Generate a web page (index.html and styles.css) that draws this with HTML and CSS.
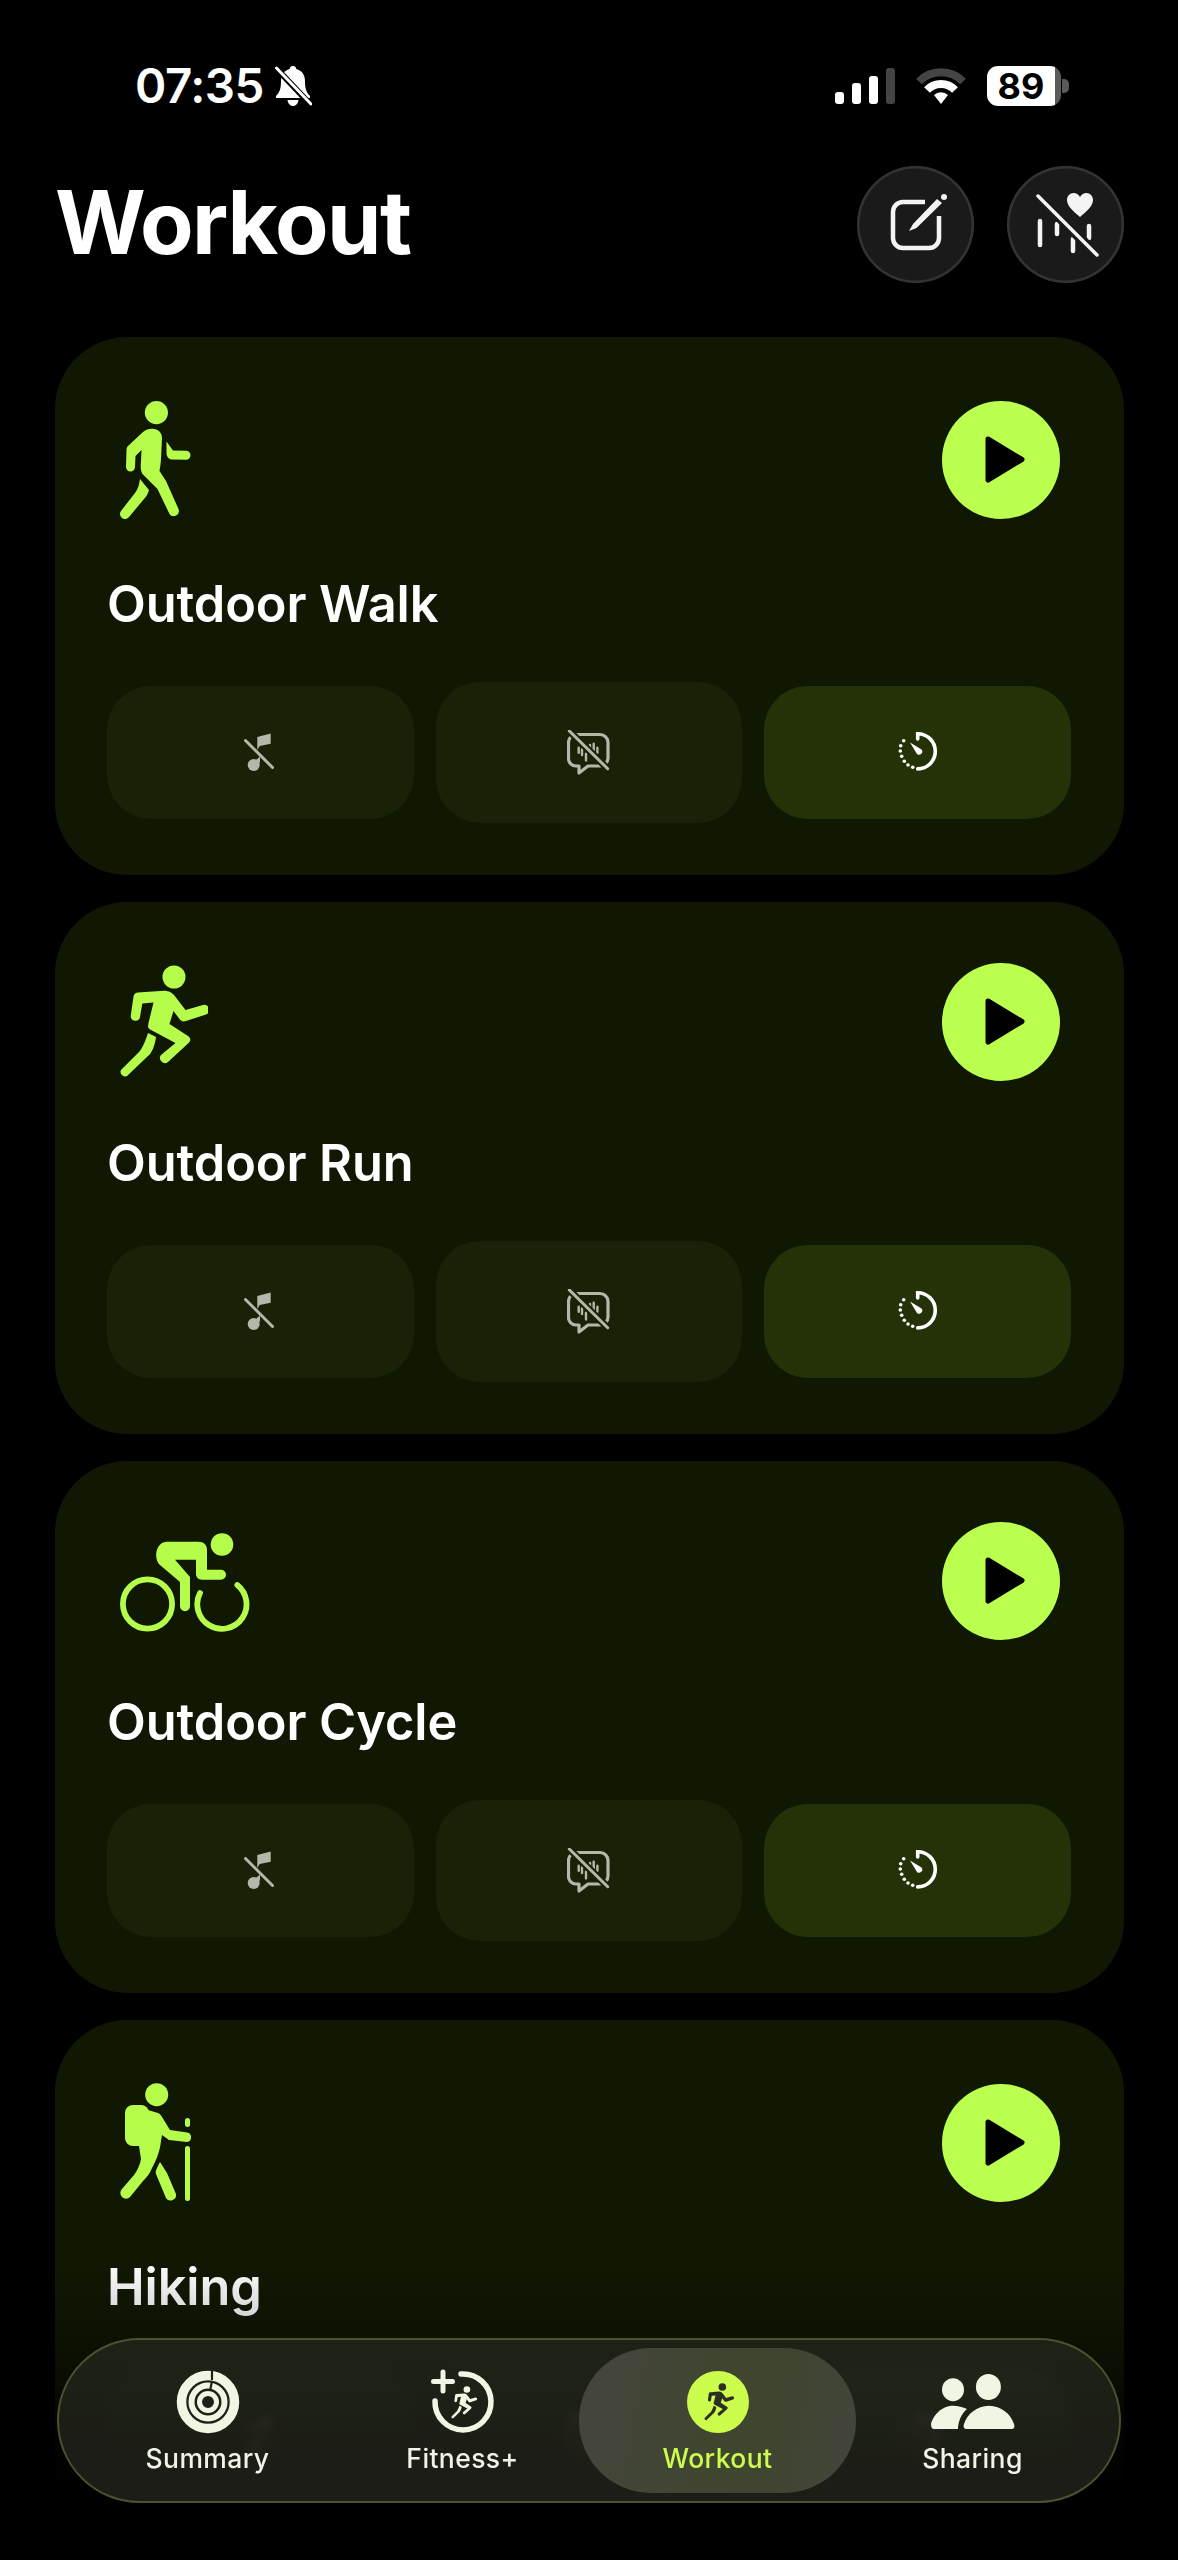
FILE: index.html
```html
<!DOCTYPE html>
<html lang="en">
<head>
<meta charset="utf-8">
<title>Workout</title>
<link rel="stylesheet" href="styles.css">
</head>
<body>
<svg class="sprite" aria-hidden="true">
  <symbol id="walker" viewBox="0 0 74 118">
    <circle cx="36.4" cy="11.6" r="11.6"/>
    <path d="M30 28C37 27 42 31 42 37L41 58C40.7 63 40 67 39.5 70L46 80L58.5 108A5.2 5.2 0 0 1 49.5 113L37.5 88L22.5 73C20.5 70 20.5 66 21 60L21.5 49L15.5 55L15 66A4.5 4.5 0 0 1 6 66L6.5 49C6.5 47 7 46 8 45L23 31C25.5 29 27.5 28 30 28Z"/>
    <path d="M46.5 40.5L53 49.5L66 49.8A4.5 4.5 0 0 1 66 58.8L52 58.5C49 58.5 47 56 46.5 53Z"/>
    <path d="M20 78L29 89C28 93 26 96 24 98L9 116A5 5 0 0 1 1 110L15 92C18 88 19 84 20 78Z"/>
  </symbol>
  <symbol id="runner" viewBox="0 0 88 114">
    <circle cx="54" cy="12" r="11.5"/>
    <path d="M18 27.5L44 25.8C49 25.8 52 28 54 30L65.5 45L83 40A5 5 0 0 1 86 49.5L66 56C63 57 61 56 59.5 54L53.5 46L49.5 59L68 71C71 73 71 76 68 78.5L48 97A5 5 0 0 1 41 90L55.5 78L31 65C28 63.5 27.5 62 28.5 58L33.5 37.5L22.3 38.5L20 52A4.7 4.7 0 0 1 10.7 51L13.5 31.5C14 29 16 27.5 18 27.5Z"/>
    <path d="M28 68L36 72C35 80 32 88 28 91L7 111A4.5 4.5 0 0 1 1 105L20 86C24 80 26 74 28 68Z"/>
  </symbol>
  <symbol id="cyclist" viewBox="0 0 130 100">
    <circle cx="102" cy="11.5" r="11.3"/>
    <path d="M47 8.7L78 8.7C84 8.7 87 12 87 17L87 36.7L101 36.7A5 5 0 0 1 101 46.7L82 46.7C78 46.7 76 44 76 41L76 26.7L55 26.7L70 44L70 73.3A5 5 0 0 1 60 73.3L60 49L40 32C33 25 36 8.7 47 8.7Z"/>
    <circle class="wheel" cx="27.5" cy="71" r="24.6"/>
    <path class="wheel" d="M80 60A24.6 24.6 0 1 0 117.3 52"/>
  </symbol>
  <symbol id="hiker" viewBox="0 0 74 120">
    <circle cx="36.7" cy="11.7" r="11.5"/>
    <rect x="5" y="22" width="24" height="41" rx="8"/>
    <path d="M28 27L38 30C40 31 41 32 42 34L50 47L67 49.5A4.8 4.8 0 0 1 67 59L49 57L42 52L41 58C40 68 36 78 32 85C30 90 28 93 23 98L10 114A5.5 5.5 0 0 1 2 106L14 92C17 88 20 82 21 76L19 63L20 27Z"/>
    <path d="M40 79L47 90L56 111A5.5 5.5 0 0 1 46 115L36 91C35 88 37 85 40 79Z"/>
    <rect x="65" y="35" width="5" height="9" rx="2.5"/>
    <rect x="65" y="63" width="5" height="55" rx="2.5"/>
  </symbol>
  <symbol id="play" viewBox="0 0 118 118">
    <path class="play-tri" d="M46 38L80 58.5L46 79Z"/>
  </symbol>
  <symbol id="note-off" viewBox="0 0 32 40">
    <circle cx="9.7" cy="32" r="6"/>
    <path d="M13.3 4L26.7 .5L26.7 10.7L15.7 13L13.3 17Z"/>
    <path d="M12 27L16 23.5L16 29L12 35Z"/>
    <path class="cut-line" d="M1.5 7.5L28.5 34.5"/>
  </symbol>
  <symbol id="voice-off" viewBox="0 0 44 46">
    <path class="voice-outline" d="M9 4.5H33A8 8 0 0 1 41 12.5V28A8 8 0 0 1 33 36H21L12 43V36H9A7.5 7.5 0 0 1 1.5 28V12.5A8 8 0 0 1 9 4.5Z"/>
    <path class="voice-bars" d="M11.7 17.7V22.7M15 19.4V25M19 23.7V30.4M23 15V21M26.7 13.7V20.4M30.4 17.7V22.7"/>
    <path class="voice-cut" d="M2.3 1L40.7 38.7"/>
    <path class="voice-slash" d="M2.3 1L40.7 38.7"/>
  </symbol>
  <symbol id="timer" viewBox="0 0 44 44">
    <path class="timer-arc" d="M21.7 8V2.7A17.6 17.6 0 0 1 21.7 37.9"/>
    <circle cx="7.7" cy="9.7" r="1.8"/><circle cx="4.7" cy="14.7" r="1.8"/><circle cx="4.3" cy="20" r="1.8"/><circle cx="5.7" cy="25.3" r="1.8"/><circle cx="8.3" cy="30.3" r="1.8"/><circle cx="12" cy="34" r="1.8"/><circle cx="16.7" cy="36.3" r="1.8"/>
    <path d="M14 11.5L25.5 18.5A3.2 3.2 0 0 1 21 23Z"/>
  </symbol>
</svg>

<div class="phone">
  <div class="status">
    <div class="status-left">
      <span class="clock">07:35</span>
      <svg class="bell" viewBox="0 0 38 40"><path d="M19 0C21 0 22 1 22.3 3C28 4.5 31 9 31 15C31 22 32 26 36 30V32H2V30C6 26 7 22 7 15C7 9 10 4.5 15.7 3C16 1 17 0 19 0Z"/><path d="M13.5 34H24.5C24 37.5 22 40 19 40C16 40 14 37.5 13.5 34Z"/><path class="bell-cut" d="M2 2L38 40"/><path class="bell-slash" d="M2.5 2L37 38"/></svg>
    </div>
    <div class="status-right">
      <div class="signal"><i class="bar bar-1"></i><i class="bar bar-2"></i><i class="bar bar-3"></i><i class="bar bar-4"></i></div>
      <svg class="wifi" viewBox="0 0 50 38"><path class="wifi-far" d="M3 14.5A31 31 0 0 1 47 14.5"/><path class="wifi-near" d="M11 23A19.5 19.5 0 0 1 39 23"/><path d="M18 28A10 10 0 0 1 32 28L25 37Z"/></svg>
      <div class="battery"><span>89</span></div>
      <i class="battery-cap"></i>
    </div>
  </div>

  <header class="header">
    <h1 class="title">Workout</h1>
    <div class="header-actions">
      <button class="round-btn">
        <svg viewBox="0 0 117 117"><path class="compose-box" d="M68 36H46A10 10 0 0 0 36 46V72A10 10 0 0 0 46 82H72A10 10 0 0 0 82 72V50"/><path d="M52 65L56 58L80 33L85 37L59.5 62Z"/><circle cx="87" cy="31" r="3"/></svg>
      </button>
      <button class="round-btn">
        <svg viewBox="0 0 117 117"><path d="M73 51C66 45 60 40 60 34C60 30 63 27 66.5 27C69.5 27 72 29 73 31C74 29 76.5 27 79.5 27C83 27 86 30 86 34C86 40 80 45 73 51Z"/><path class="hb-bars" d="M33 55V79M50 58V68M66 73V85M82 60V72"/><path class="hb-cut" d="M31 30L90 89"/><path class="hb-slash" d="M31 30L90 89"/></svg>
      </button>
    </div>
  </header>

  <main class="cards">
    <section class="card card-tall">
      <div class="card-head">
        <svg class="sport sport-walk"><use href="#walker"/></svg>
        <button class="play"><svg><use href="#play"/></svg></button>
      </div>
      <h2 class="card-title">Outdoor Walk</h2>
      <div class="actions">
        <button class="action"><svg class="ic-note"><use href="#note-off"/></svg></button>
        <button class="action action-mid"><svg class="ic-voice"><use href="#voice-off"/></svg></button>
        <button class="action action-on"><svg class="ic-timer"><use href="#timer"/></svg></button>
      </div>
    </section>

    <section class="card">
      <div class="card-head">
        <svg class="sport sport-run"><use href="#runner"/></svg>
        <button class="play"><svg><use href="#play"/></svg></button>
      </div>
      <h2 class="card-title">Outdoor Run</h2>
      <div class="actions">
        <button class="action"><svg class="ic-note"><use href="#note-off"/></svg></button>
        <button class="action action-mid"><svg class="ic-voice"><use href="#voice-off"/></svg></button>
        <button class="action action-on"><svg class="ic-timer"><use href="#timer"/></svg></button>
      </div>
    </section>

    <section class="card">
      <div class="card-head">
        <svg class="sport sport-cycle"><use href="#cyclist"/></svg>
        <button class="play"><svg><use href="#play"/></svg></button>
      </div>
      <h2 class="card-title">Outdoor Cycle</h2>
      <div class="actions">
        <button class="action"><svg class="ic-note"><use href="#note-off"/></svg></button>
        <button class="action action-mid"><svg class="ic-voice"><use href="#voice-off"/></svg></button>
        <button class="action action-on"><svg class="ic-timer"><use href="#timer"/></svg></button>
      </div>
    </section>

    <section class="card card-tall">
      <div class="card-head">
        <svg class="sport sport-hike"><use href="#hiker"/></svg>
        <button class="play"><svg><use href="#play"/></svg></button>
      </div>
      <h2 class="card-title">Hiking</h2>
      <div class="actions">
        <button class="action"><svg class="ic-note"><use href="#note-off"/></svg></button>
        <button class="action action-mid"><svg class="ic-voice"><use href="#voice-off"/></svg></button>
        <button class="action action-on"><svg class="ic-timer"><use href="#timer"/></svg></button>
      </div>
    </section>
  </main>

  <div class="fade"></div>

  <nav class="tabbar">
    <a class="tab">
      <svg class="tab-icon" viewBox="0 0 62 62"><circle class="ring ring-a" cx="31" cy="31" r="26.5"/><circle class="ring ring-b" cx="31" cy="31" r="16.5"/><circle class="ring ring-c" cx="31" cy="31" r="8.5"/><path class="ring-gap" d="M35 0V9M35 10L33 20"/></svg>
      <span class="tab-label">Summary</span>
    </a>
    <a class="tab">
      <svg class="tab-icon" viewBox="0 0 62 62"><path class="fit-arc" d="M29 3A28 28 0 1 1 3 30"/><path class="fit-plus" d="M11 1V20M1.5 10.500H20.500"/><svg x="19" y="15" width="26" height="33"><use href="#runner"/></svg></svg>
      <span class="tab-label">Fitness+</span>
    </a>
    <a class="tab tab-active">
      <svg class="tab-icon" viewBox="0 0 62 62"><circle class="work-disc" cx="31" cy="31" r="31"/><svg class="work-run" x="17" y="12" width="30" height="38"><use href="#runner"/></svg></svg>
      <span class="tab-label">Workout</span>
    </a>
    <a class="tab">
      <svg class="tab-share" viewBox="0 0 84 62"><ellipse cx="22" cy="18.700" rx="11" ry="11.500"/><ellipse cx="57.400" cy="16" rx="12.500" ry="13"/><path d="M36 58H80C83 58 84 56 83 53C80 43 70 34.700 58 34.700C46 34.700 36 43 33 53C32 56 33 58 36 58Z"/><path d="M3 58H27C27 51 30 43 36 38C32 36 27 34.700 22 34.700C10 34.700 2 45 0 53C0 56 1 58 3 58Z"/></svg>
      <span class="tab-label">Sharing</span>
    </a>
  </nav>
</div>
</body>
</html>
```
FILE: styles.css
```css
* { box-sizing: border-box; }
html, body { margin: 0; padding: 0; background: #000; }
body { font-family: Inter, "Liberation Sans", sans-serif; color: #fff; }
button { border: 0; padding: 0; margin: 0; font: inherit; color: inherit; }
.sprite { position: absolute; width: 0; height: 0; overflow: hidden; }

.phone { position: relative; width: 1178px; height: 2560px; overflow: hidden; background: #000; }

/* status bar */
.status { display: flex; justify-content: space-between; align-items: center; height: 40px; margin-top: 66px; padding: 0 109px 0 135px; }
.status-left { display: flex; align-items: center; gap: 10px; }
.clock { font-size: 47.500px; font-weight: 600; line-height: 40px; letter-spacing: -.5px; }
.bell { width: 38px; height: 40px; fill: #fff; }
.bell-cut { stroke: #000; stroke-width: 6; }
.bell-slash { stroke: #fff; stroke-width: 3; stroke-linecap: round; }
.status-right { display: flex; align-items: center; }
.signal { display: flex; align-items: flex-end; gap: 8px; height: 36px; margin-right: 21px; }
.bar { display: block; width: 9px; border-radius: 3px; background: #fff; }
.bar-1 { height: 12px; }
.bar-2 { height: 21px; }
.bar-3 { height: 28px; }
.bar-4 { height: 36px; background: #444; }
.wifi { width: 50px; height: 38px; margin-right: 21px; fill: #fff; }
.wifi-far, .wifi-near { fill: none; stroke-width: 8; }
.wifi-far { stroke: #444; }
.wifi-near { stroke: #fff; }
.battery { display: flex; align-items: center; justify-content: center; width: 74px; height: 40px; border-radius: 11px; background: linear-gradient(90deg, #fff 92%, #5a5a5a 92%); color: #000; font-size: 36px; font-weight: 700; line-height: 40px; padding-right: 6px; }
.battery-cap { display: block; width: 7px; height: 14px; border-radius: 0 5px 5px 0; background: #5a5a5a; margin-left: 1px; }

/* header */
.header { display: flex; justify-content: space-between; align-items: center; margin-top: 60px; padding: 0 54px 0 55px; }
.title { margin: -6px 0 0; font-size: 87.500px; font-weight: 700; line-height: 100px; letter-spacing: -1.500px; }
.header-actions { display: flex; gap: 33px; }
.round-btn { display: block; width: 117px; height: 117px; border-radius: 50%; background: #1a1a1a; box-shadow: inset 0 0 0 2.500px #333; }
.round-btn svg { display: block; width: 117px; height: 117px; fill: #f4f4f4; }
.compose-box { fill: none; stroke: #f4f4f4; stroke-width: 4.500; }
.hb-bars { fill: none; stroke: #f4f4f4; stroke-width: 4.500; stroke-linecap: round; }
.hb-cut { fill: none; stroke: #1a1a1a; stroke-width: 10; }
.hb-slash { fill: none; stroke: #f4f4f4; stroke-width: 3.500; stroke-linecap: round; }

/* cards */
.cards { display: flex; flex-direction: column; gap: 27px; margin-top: 54px; padding: 0 54px 0 55px; }
.card { flex: none; display: flex; flex-direction: column; padding: 61px 53px 56px 52px; border-radius: 72px; background: #101803; }
.card-tall { padding-top: 64px; }
.card-head { display: flex; justify-content: space-between; align-items: center; height: 118px; padding: 0 11px 0 13px; }
.sport { display: block; fill: #b6fd4b; }
.sport-walk { width: 74px; height: 118px; }
.sport-run { width: 88px; height: 114px; }
.sport-cycle { width: 130px; height: 100px; margin-top: 4px; }
.sport-hike { width: 74px; height: 120px; }
.wheel { fill: none; stroke: #b6fd4b; stroke-width: 5.800; stroke-linecap: round; }
.play { display: block; width: 118px; height: 118px; border-radius: 50%; background: #bbff4f; }
.play svg { display: block; width: 118px; height: 118px; }
.play-tri { fill: #000; stroke: #000; stroke-width: 5; stroke-linejoin: round; }
.card-title { margin: 52px 0 52px; font-size: 50.500px; font-weight: 600; line-height: 60px; letter-spacing: -.1px; }
.card-tall .card-title { margin: 55px 0 52px; }
.actions { display: grid; grid-template-columns: repeat(3, 1fr); gap: 22px; height: 133px; }
.action { display: flex; align-items: center; justify-content: center; border-radius: 44px; background: #192206; }
.action-mid { margin: -4px 0; }
.action-on { background: #253208; }
.ic-note { width: 32px; height: 40px; fill: #b3b8ab; }
.cut-line { fill: none; stroke: #b3b8ab; stroke-width: 3; stroke-linecap: round; }
.ic-voice { width: 44px; height: 46px; fill: none; }
.voice-outline { stroke: #b3b8ab; stroke-width: 3.200; stroke-linejoin: round; fill: none; }
.voice-bars { stroke: #b3b8ab; stroke-width: 2.400; fill: none; stroke-linecap: round; }
.voice-cut { stroke: #192206; stroke-width: 7; }
.voice-slash { stroke: #b3b8ab; stroke-width: 3; stroke-linecap: round; }
.ic-timer { width: 44px; height: 44px; fill: #fff; }
.timer-arc { fill: none; stroke: #fff; stroke-width: 3.600; stroke-linecap: round; }

/* bottom fade + tab bar */
.fade { position: absolute; left: 0; right: 0; bottom: 0; height: 300px; background: linear-gradient(180deg, rgba(0,0,0,0) 0%, rgba(0,0,0,.22) 25%, rgba(0,0,0,.75) 55%, #000 75%); }
.tabbar { position: absolute; left: 57px; top: 2338px; width: 1064px; height: 165px; display: grid; grid-template-columns: repeat(4, 255px); align-items: stretch; padding: 8px 21px; border: 2px solid #4b5230; border-radius: 83px; background: rgba(38,40,30,.72); backdrop-filter: blur(5px); }
.tab { display: flex; flex-direction: column; align-items: center; padding-top: 23px; color: #f0f4e6; fill: #f0f6e4; }
.tab-icon { display: block; width: 62px; height: 62px; overflow: visible; }
.tab-share { display: block; width: 84px; height: 62px; }
.tab-label { margin-top: 9px; font-size: 26.500px; font-weight: 500; line-height: 32px; letter-spacing: .4px; }
.tab-active { margin: 0 -11px; height: 145px; border-radius: 72px; background: linear-gradient(100deg, #44463c, #3f452e 60%, #42453a); color: #cdfd4c; }
.ring { fill: none; stroke: #f0f6e4; }
.ring-a { stroke-width: 9.500; }
.ring-b { stroke-width: 6; }
.ring-c { stroke-width: 5; }
.ring-gap { fill: none; stroke: #1e2116; stroke-width: 2.200; }
.fit-arc { fill: none; stroke: #f0f6e4; stroke-width: 5.500; stroke-linecap: round; }
.fit-plus { fill: none; stroke: #f0f6e4; stroke-width: 5; stroke-linecap: round; }
.work-disc { fill: #cdfd4c; }
.work-run { fill: #2b3022; }
```
